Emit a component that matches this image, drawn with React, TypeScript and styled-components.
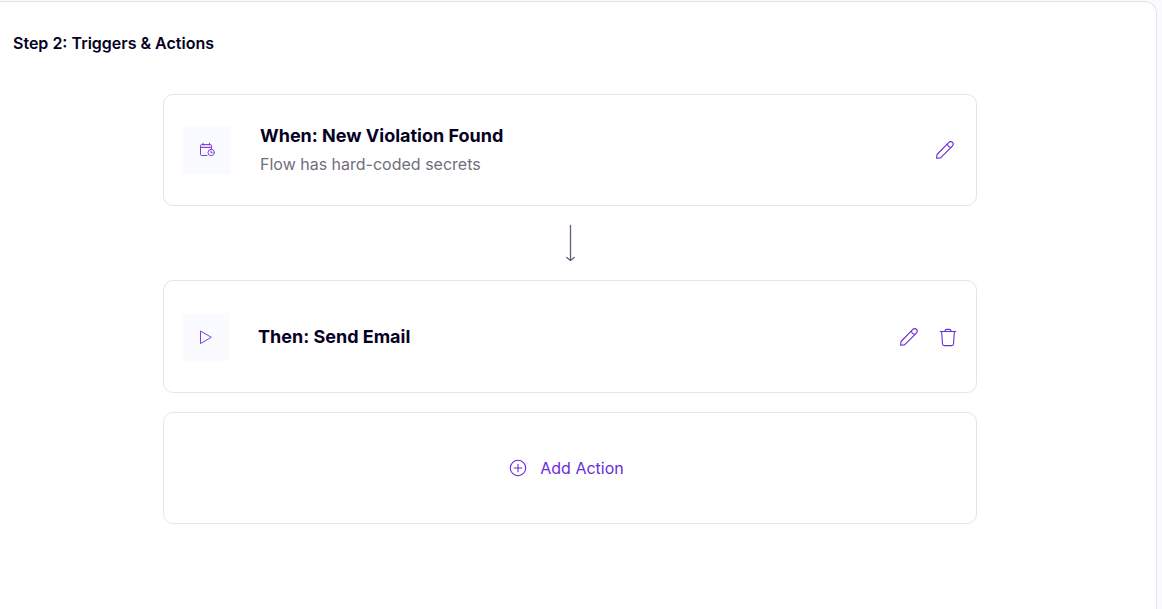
import React from "react";
import styled, { createGlobalStyle } from "styled-components";

const GlobalStyle = createGlobalStyle`
  *, *::before, *::after { box-sizing: border-box; }
  html, body, #root { min-height: 100%; }
  body {
    margin: 0;
    background: #fafaff;
    color: #05001f;
    font-family: Inter, "Liberation Sans", sans-serif;
  }
`;

const Page = styled.div`
  display: flex;
  min-height: 100vh;
  padding: 1px 5px 0 0;
`;

const Panel = styled.main`
  flex: 1;
  padding: 31px 29px 31px 13px;
  background: #fff;
  border: 1px solid #e3e3ea;
  border-width: 1px 1px 0 0;
  border-radius: 0 12px 0 0;
`;

const Heading = styled.h1`
  margin: 0 0 41px;
  font-size: 16px;
  line-height: 20px;
  font-weight: 600;
`;

const Flow = styled.div`
  display: flex;
  flex-direction: column;
  max-width: 814px;
  margin: 0 auto;
`;

const Card = styled.section<{ $height?: number }>`
  display: flex;
  align-items: center;
  gap: 29px;
  min-height: ${(p) => p.$height ?? 112}px;
  padding: 0 19px;
  border: 1px solid #e5e5e7;
  border-radius: 10px;
`;

const Tile = styled.div<{ $width: number }>`
  display: flex;
  flex: none;
  align-items: center;
  justify-content: center;
  width: ${(p) => p.$width}px;
  height: 48px;
  background: #fafbff;
`;

const CardText = styled.div`
  flex: 1;
`;

const Title = styled.h2`
  margin: 0;
  font-size: 18px;
  line-height: 28px;
  font-weight: 700;
`;

const Description = styled.p`
  margin: 0;
  color: #6f6f7c;
  font-size: 16px;
  line-height: 28px;
`;

const Actions = styled.div`
  display: flex;
  gap: 18px;
`;

const IconButton = styled.button`
  display: flex;
  padding: 0;
  border: 0;
  background: none;
  color: #6a2bd9;
  cursor: pointer;
`;

const Connector = styled.div`
  display: flex;
  align-items: center;
  justify-content: center;
  height: 74px;
`;

const AddButton = styled.button`
  display: flex;
  align-items: center;
  justify-content: center;
  gap: 13px;
  min-height: 112px;
  margin-top: 19px;
  padding: 0 26px 0 19px;
  border: 1px solid #e5e5e7;
  border-radius: 10px;
  background: #fff;
  color: #6a2bd9;
  font-family: inherit;
  font-size: 16px;
  line-height: 24px;
  cursor: pointer;
`;

const PencilIcon = () => (
  <svg width="24" height="24" viewBox="0 0 24 24" fill="none" stroke="currentColor" strokeWidth="1.1" strokeLinejoin="round" aria-hidden="true">
    <path d="M3.6 20.2 4 16.5 15.6 4.7C16.9 3.4 18.4 3.3 19.5 4.4C20.6 5.5 20.4 7 19.1 8.3L7.5 19.9Z" />
    <path d="M14.6 5.7C14.3 7.7 16 9.6 18.2 9.2" />
  </svg>
);

const TrashIcon = () => (
  <svg width="18" height="24" viewBox="3 0 18 24" fill="none" stroke="currentColor" strokeWidth="1.1" strokeLinecap="round" strokeLinejoin="round" aria-hidden="true">
    <path d="M4.2 6.5H19.8M9 6.3C9 5 9.8 4.4 11 4.4H13C14.2 4.4 15 5 15 6.3M5.6 6.5 6.5 19C6.6 20 7.2 20.6 8.2 20.6H15.8C16.8 20.6 17.4 20 17.5 19L18.4 6.5" />
  </svg>
);

const CalendarIcon = () => (
  <svg width="18" height="18" viewBox="-1 0 18 18" fill="none" stroke="#7c3fe0" strokeWidth="1" strokeLinecap="round" strokeLinejoin="round" aria-hidden="true">
    <path d="M8 14.5H2.7C1.9 14.5 1.5 14.1 1.5 13.3V4.7C1.5 3.9 1.9 3.5 2.7 3.5H11.3C12.1 3.5 12.5 3.9 12.5 4.7V8M1.5 6.5H12.5M4 2.2V4M10.5 2.2V4" />
    <path d="M2 5H12" opacity="0.35" />
    <circle cx="12.2" cy="11.5" r="3.2" />
    <path d="M12 10V11.8H13.3" />
  </svg>
);

const PlayIcon = () => (
  <svg width="18" height="18" viewBox="0 0 18 18" fill="none" stroke="#7c3fe0" strokeWidth="1" strokeLinejoin="round" aria-hidden="true">
    <path d="M3.5 3V15.6L14.3 9.3Z" />
  </svg>
);

const PlusCircleIcon = () => (
  <svg width="18" height="18" viewBox="0 0 18 18" fill="none" stroke="currentColor" strokeWidth="1.1" strokeLinecap="round" aria-hidden="true">
    <circle cx="9" cy="9" r="7.7" />
    <path d="M9 5.2V12.8M5.2 9H12.8" />
  </svg>
);

const ArrowDownIcon = () => (
  <svg width="12" height="38" viewBox="0 0 12 38" fill="none" stroke="#626078" strokeWidth="1.3" strokeLinecap="round" strokeLinejoin="round" aria-hidden="true">
    <path d="M6.5 1.5V36.2M2.8 33.5 6.5 36.4 10.2 33.5" />
  </svg>
);

export default function App() {
  return (
    <>
      <GlobalStyle />
      <Page>
        <Panel>
          <Heading>Step 2: Triggers &amp; Actions</Heading>
          <Flow>
            <Card>
              <Tile $width={48}>
                <CalendarIcon />
              </Tile>
              <CardText>
                <Title>When: New Violation Found</Title>
                <Description>Flow has hard-coded secrets</Description>
              </CardText>
              <IconButton type="button" aria-label="Edit trigger">
                <PencilIcon />
              </IconButton>
            </Card>
            <Connector>
              <ArrowDownIcon />
            </Connector>
            <Card $height={113}>
              <Tile $width={46}>
                <PlayIcon />
              </Tile>
              <CardText>
                <Title>Then: Send Email</Title>
              </CardText>
              <Actions>
                <IconButton type="button" aria-label="Edit action">
                  <PencilIcon />
                </IconButton>
                <IconButton type="button" aria-label="Delete action">
                  <TrashIcon />
                </IconButton>
              </Actions>
            </Card>
            <AddButton type="button">
              <PlusCircleIcon />
              Add Action
            </AddButton>
          </Flow>
        </Panel>
      </Page>
    </>
  );
}
